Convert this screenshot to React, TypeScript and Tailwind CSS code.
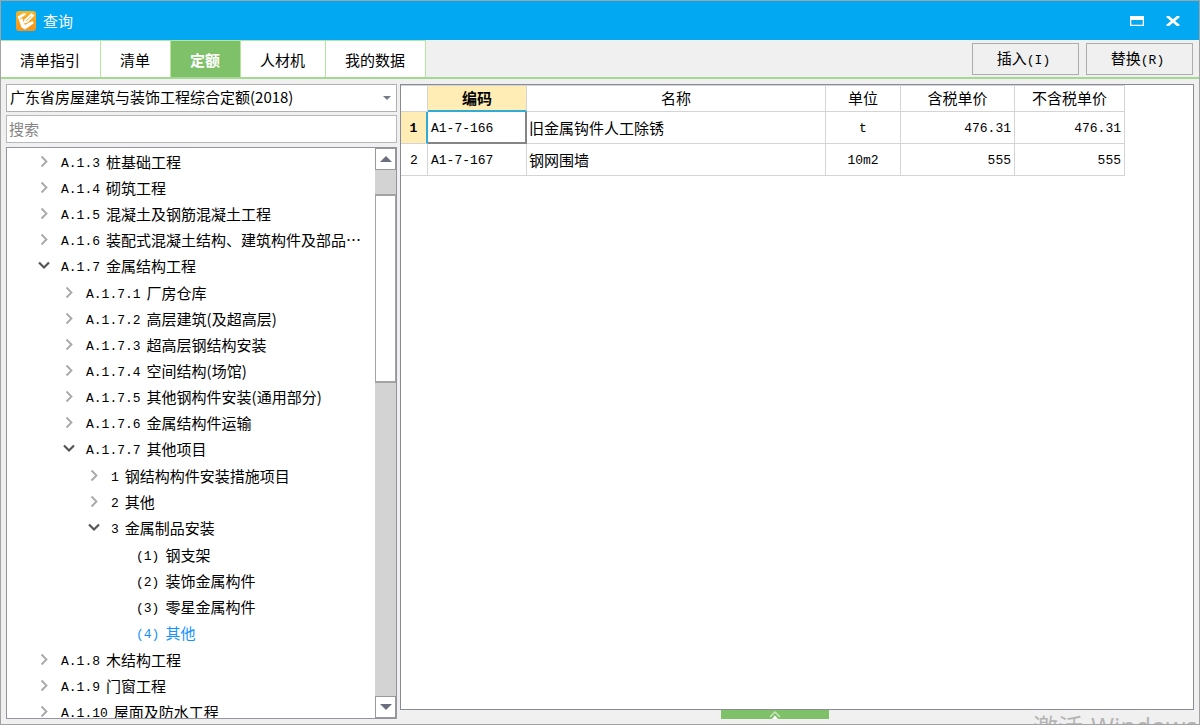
import type { ReactNode } from "react";
import clsx from "clsx";

type Node = { code: string; name: string; open?: boolean; leaf?: boolean; active?: boolean; children?: Node[] };

const tree: Node[] = [
  { code: "A.1.3", name: "桩基础工程" },
  { code: "A.1.4", name: "砌筑工程" },
  { code: "A.1.5", name: "混凝土及钢筋混凝土工程" },
  { code: "A.1.6", name: "装配式混凝土结构、建筑构件及部品…" },
  {
    code: "A.1.7",
    name: "金属结构工程",
    open: true,
    children: [
      { code: "A.1.7.1", name: "厂房仓库" },
      { code: "A.1.7.2", name: "高层建筑(及超高层)" },
      { code: "A.1.7.3", name: "超高层钢结构安装" },
      { code: "A.1.7.4", name: "空间结构(场馆)" },
      { code: "A.1.7.5", name: "其他钢构件安装(通用部分)" },
      { code: "A.1.7.6", name: "金属结构件运输" },
      {
        code: "A.1.7.7",
        name: "其他项目",
        open: true,
        children: [
          { code: "1", name: "钢结构构件安装措施项目" },
          { code: "2", name: "其他" },
          {
            code: "3",
            name: "金属制品安装",
            open: true,
            children: [
              { code: "(1)", name: "钢支架", leaf: true },
              { code: "(2)", name: "装饰金属构件", leaf: true },
              { code: "(3)", name: "零星金属构件", leaf: true },
              { code: "(4)", name: "其他", leaf: true, active: true },
            ],
          },
        ],
      },
    ],
  },
  { code: "A.1.8", name: "木结构工程" },
  { code: "A.1.9", name: "门窗工程" },
  { code: "A.1.10", name: "屋面及防水工程" },
];

const indents = ["pl-[30px]", "pl-[55px]", "pl-[80px]", "pl-[105px]"];

const rows = [
  { code: "A1-7-166", name: "旧金属钩件人工除锈", unit: "t", taxed: "476.31", untaxed: "476.31" },
  { code: "A1-7-167", name: "钢网围墙", unit: "10m2", taxed: "555", untaxed: "555" },
];

function Mono({ children }: { children: ReactNode }) {
  return <span className="font-['Liberation_Mono',monospace] text-[13px]">{children}</span>;
}

function Chevron({ open }: { open?: boolean }) {
  return open ? (
    <svg viewBox="0 0 14 14" className="size-3.5 shrink-0" fill="none" stroke="#555" strokeWidth="2.2">
      <path d="M2 3.5 7 8.5 12 3.5" />
    </svg>
  ) : (
    <svg viewBox="0 0 14 14" className="size-3.5 shrink-0" fill="none" stroke="#a8a8a8" strokeWidth="1.8">
      <path d="M4.500 1.500 9.500 6.500 4.500 11.500" />
    </svg>
  );
}

function TreeList({ nodes, depth }: { nodes: Node[]; depth: number }) {
  return (
    <ul role={depth === 0 ? "tree" : "group"} className={clsx(depth === 1 && "py-px", depth > 1 && "pt-px")}>
      {nodes.map((n) => (
        <li key={n.code} role="treeitem" aria-expanded={n.leaf ? undefined : !!n.open} aria-selected={!!n.active}>
          <button
            type="button"
            className={clsx(
              "flex h-[26px] w-full items-center gap-1.5 text-left whitespace-nowrap",
              indents[depth],
              n.active && "text-[#1492ff]"
            )}
          >
            {n.leaf ? <span className="w-3.5 shrink-0" /> : <Chevron open={n.open} />}
            <span className="ml-1 shrink-0">
              <Mono>{n.code}</Mono>
            </span>
            <span>{n.name}</span>
          </button>
          {n.children && <TreeList nodes={n.children} depth={depth + 1} />}
        </li>
      ))}
    </ul>
  );
}

function Tab({ children, active }: { children: ReactNode; active?: boolean }) {
  return (
    <button
      type="button"
      role="tab"
      aria-selected={!!active}
      className={clsx(
        "border-t border-r border-[#b4e6a0] pt-0.5 pr-5 pl-[19px]",
        active ? "bg-[#7fc169] font-bold text-white" : "bg-white"
      )}
    >
      {children}
    </button>
  );
}

function ActionButton({ label, hotkey }: { label: string; hotkey: string }) {
  return (
    <button type="button" className="h-8 w-[107px] border border-[#adadad] bg-[#f0f0f0] pr-1">
      {label}
      <Mono>({hotkey})</Mono>
    </button>
  );
}

function ScrollButton({ up }: { up?: boolean }) {
  return (
    <button
      type="button"
      aria-label={up ? "向上滚动" : "向下滚动"}
      className="flex h-[22px] shrink-0 items-center justify-center border border-[#999] bg-white"
    >
      <svg viewBox="0 0 12 6" className="h-1.5 w-3" fill="#6b6f80">
        <path d={up ? "M0 6 6 0 12 6Z" : "M0 0 6 6 12 0Z"} />
      </svg>
    </button>
  );
}

export default function App() {
  const th = "border-t border-r border-b border-[#d4d4d4] p-0 pb-0.5 font-normal";
  const td = "border-r border-b border-[#d4d4d4] p-0";
  return (
    <div className="relative flex h-screen flex-col overflow-hidden border border-[#a3a3a3] bg-[#f0f0f0] font-['Noto_Sans_CJK_SC',sans-serif] text-[15px] leading-5 text-black">
      <header className="flex h-[39px] shrink-0 items-center bg-[#02a9f2] pr-[19px] pl-[15px] text-white">
        <svg viewBox="0 0 20 20" className="size-5">
          <defs>
            <linearGradient id="logo" x1="0" y1="0" x2="0" y2="1">
              <stop offset="0" stopColor="#f7b522" />
              <stop offset="1" stopColor="#f6931d" />
            </linearGradient>
          </defs>
          <rect width="20" height="20" rx="3" fill="url(#logo)" />
          <path d="M1.500 5.500 8 2 10.500 3 6 6.500 7.500 10.500 9 14 13 11.500 17 10 17.500 12.500 9 18.500 5.500 16.500 3 9Z" fill="#fff" />
          <path d="M7.500 12.500 8.500 8.500 15.500 2 18.500 4.500 11.500 11.500Z" fill="#fff" />
          <path d="M4 8 7.500 6M10 10 15.500 5" stroke="#f6a11d" strokeWidth=".8" />
        </svg>
        <h1 className="ml-[7px] grow">查询</h1>
        <button type="button" aria-label="最大化" className="mr-[22px]">
          <svg viewBox="0 0 14 10" className="h-2.5 w-3.5">
            <path d="M0 0H14V10H0ZM1.300 4V8.700H12.700V4Z" fill="#fff" fillRule="evenodd" />
          </svg>
        </button>
        <button type="button" aria-label="关闭">
          <svg viewBox="0 0 14 10" className="h-2.5 w-3.5" fill="none" stroke="#fff" strokeWidth="2.800">
            <path d="M1 0 7 5 13 0M1 10 7 5 13 10" />
          </svg>
        </button>
      </header>

      <div className="flex h-[39px] shrink-0 justify-between border-b-2 border-[#a4d995]">
        <div role="tablist" className="flex">
          <Tab>清单指引</Tab>
          <Tab>清单</Tab>
          <Tab active>定额</Tab>
          <Tab>人材机</Tab>
          <Tab>我的数据</Tab>
        </div>
        <div className="flex gap-[7px] pt-[3px] pr-1.5">
          <ActionButton label="插入" hotkey="I" />
          <ActionButton label="替换" hotkey="R" />
        </div>
      </div>

      <main className="flex min-h-0 grow gap-[3px] px-[5px] pt-[5px]">
        <aside className="flex w-[391px] shrink-0 flex-col pb-[5px]">
          <div className="relative h-7 shrink-0">
            <select
              aria-label="定额库"
              className="size-full appearance-none border border-[#b0b0b0] bg-white pb-0.5 pl-[3px]"
            >
              <option>广东省房屋建筑与装饰工程综合定额(2018)</option>
            </select>
            <svg viewBox="0 0 8 4" className="pointer-events-none absolute top-3 right-1.5 h-1 w-2" fill="#777b88">
              <path d="M0 0H8L4 4Z" />
            </svg>
          </div>
          <input
            type="text"
            aria-label="搜索"
            placeholder="搜索"
            className="mt-[3px] h-7 shrink-0 border border-[#b5b9bb] bg-white px-0.5 pb-0.5 placeholder:text-[#858585]"
          />
          <div className="mt-1 flex min-h-0 grow border border-[#92959f] bg-white">
            <nav aria-label="定额目录" className="min-w-0 grow overflow-hidden pt-px">
              <TreeList nodes={tree} depth={0} />
            </nav>
            <div className="flex w-[21px] shrink-0 flex-col bg-[#d3d3d3]">
              <ScrollButton up />
              <div className="mt-6 h-[189px] border-x border-y-2 border-[#a3a3a3] bg-white" />
              <div className="grow" />
              <ScrollButton />
            </div>
          </div>
        </aside>

        <section className="flex min-w-0 grow flex-col">
          <div className="min-h-0 grow overflow-hidden border border-[#878b97] bg-white">
            <table className="w-[724px] table-fixed border-separate border-spacing-0">
              <colgroup>
                <col className="w-[27px]" />
                <col className="w-[99px]" />
                <col className="w-[299px]" />
                <col className="w-[75px]" />
                <col className="w-[114px]" />
                <col className="w-[110px]" />
              </colgroup>
              <thead>
                <tr className="h-[27px]">
                  <th className={th} aria-label="序号" />
                  <th className="border-t border-r border-b-2 border-t-[#d4d4d4] border-r-[#d4d4d4] border-b-[#2fabd4] bg-[#ffedb5] p-0 font-bold">
                    编码
                  </th>
                  <th className={th}>名称</th>
                  <th className={th}>单位</th>
                  <th className={th}>含税单价</th>
                  <th className={th}>不含税单价</th>
                </tr>
              </thead>
              <tbody>
                {rows.map((r, i) => (
                  <tr key={r.code} className="h-8">
                    <th
                      scope="row"
                      className={clsx(
                        "border-b border-b-[#d4d4d4] p-0",
                        i === 0 ? "border-r-2 border-r-[#2fabd4] bg-[#ffedb5] font-bold" : "border-r border-r-[#d4d4d4] font-normal"
                      )}
                    >
                      <Mono>{i + 1}</Mono>
                    </th>
                    <td
                      className={clsx(
                        "pr-0 pl-[3px]",
                        i === 0 ? "border-r-2 border-b-2 border-[#858585]" : "border-r border-b border-[#d4d4d4]"
                      )}
                    >
                      <Mono>{r.code}</Mono>
                    </td>
                    <td className={clsx(td, "pl-0.5")}>{r.name}</td>
                    <td className={clsx(td, "text-center")}>
                      <Mono>{r.unit}</Mono>
                    </td>
                    <td className={clsx(td, "pr-[3px] text-right")}>
                      <Mono>{r.taxed}</Mono>
                    </td>
                    <td className={clsx(td, "pr-[3px] text-right")}>
                      <Mono>{r.untaxed}</Mono>
                    </td>
                  </tr>
                ))}
              </tbody>
            </table>
          </div>
          <div className="flex h-3.5 shrink-0 justify-center pr-11">
            <button type="button" aria-label="展开" className="flex h-[9px] w-[108px] justify-center bg-[#7fc169]">
              <svg viewBox="0 0 12 9" className="h-[9px] w-3">
                <path d="M1 7 6 2 11 7" fill="none" stroke="#c9e6bf" strokeWidth="1.500" />
                <path d="M3 9 6 5.500 9 9Z" fill="#fff" />
              </svg>
            </button>
          </div>
        </section>
      </main>

      <p className="pointer-events-none absolute right-0 bottom-0 flex h-3 w-[166px] gap-2 overflow-hidden text-[25px] leading-7 whitespace-nowrap text-[#b4b4b4]">
        <span>激活</span>
        <span className="font-['Open_Sans',sans-serif]">Windows</span>
      </p>
    </div>
  );
}
